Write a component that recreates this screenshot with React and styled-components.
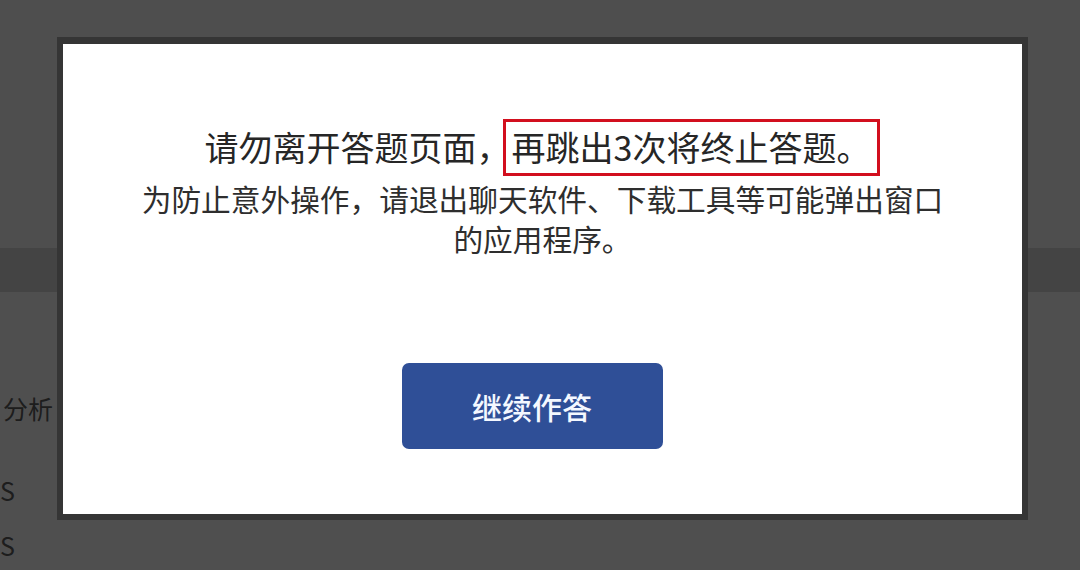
import React from "react";
import styled, { createGlobalStyle } from "styled-components";

const GlobalStyle = createGlobalStyle`
  html, body {
    margin: 0;
    padding: 0;
    width: 1080px;
    height: 570px;
    overflow: hidden;
  }
  body {
    font-family: "Noto Sans CJK SC", "Noto Sans", sans-serif;
  }
`;

const Page = styled.div`
  position: relative;
  width: 1080px;
  height: 570px;
  overflow: hidden;
  background: #ffffff;
`;

// underlying exam page, seen through the mask
const PageHead = styled.div`
  height: 248px;
  background: #fafafa;
`;

const NavBand = styled.div`
  height: 44px;
  background: #dcdcdc;
`;

const PageBody = styled.div`
  display: flex;
  flex-direction: column;
  padding: 101px 0 0 0;
  color: #5e5e5e;
  font-size: 25px;
  line-height: 30px;
`;

const BodyLine = styled.div`
  margin-top: ${(p) => p.$offset || 0}px;
  margin-left: ${(p) => p.$indent || 0}px;
`;

const Mask = styled.div`
  position: absolute;
  inset: 0;
  background: rgba(0, 0, 0, 0.69);
  padding: 37px 0 0 57px;
`;

const Dialog = styled.div`
  box-sizing: border-box;
  width: 971px;
  height: 483px;
  background: #ffffff;
  border: 6px solid #353535;
  border-top-width: 7px;
  display: flex;
  flex-direction: column;
  align-items: center;
  padding-top: 75px;
  color: #2a2a2a;
`;

const Title = styled.div`
  font-size: 34px;
  line-height: 50px;
  color: #262626;
  white-space: nowrap;
`;

const Comma = styled.span`
  font-feature-settings: ${(p) => (p.$half ? '"halt"' : "normal")};
  margin-right: ${(p) => p.$space || 0}px;
`;

const Highlight = styled.span`
  display: inline-block;
  border: 3px solid #d20f1e;
  padding: 0 7px 1px 6px;
`;

const Notice = styled.div`
  margin-top: 3px;
  font-size: 29.7px;
  line-height: 40px;
  color: #2e2e2e;
  text-align: center;
  width: 815px;
`;

const ContinueButton = styled.button`
  margin-top: 104px;
  margin-right: 21px;
  width: 261px;
  height: 86px;
  border: none;
  border-radius: 7px;
  background: #2f4f97;
  color: #f4f8ff;
  font-family: "Noto Sans CJK SC", "Noto Sans", sans-serif;
  font-size: 30px;
  font-weight: 500;
  cursor: pointer;
`;

export default function App() {
  return (
    <>
      <GlobalStyle />
      <Page>
        <PageHead />
        <NavBand />
        <PageBody>
          <BodyLine $indent={3}>分析</BodyLine>
          <BodyLine $offset={52}>S</BodyLine>
          <BodyLine $offset={25}>S</BodyLine>
        </PageBody>
        <Mask>
          <Dialog>
            <Title>
              请勿离开答题页面<Comma $half $space={9}>，</Comma>
              <Highlight>再跳出3次将终止答题。</Highlight>
            </Title>
            <Notice>
              为防止意外操作，请退出聊天软件、下载工具等可能弹出窗口的应用程序。
            </Notice>
            <ContinueButton>继续作答</ContinueButton>
          </Dialog>
        </Mask>
      </Page>
    </>
  );
}
